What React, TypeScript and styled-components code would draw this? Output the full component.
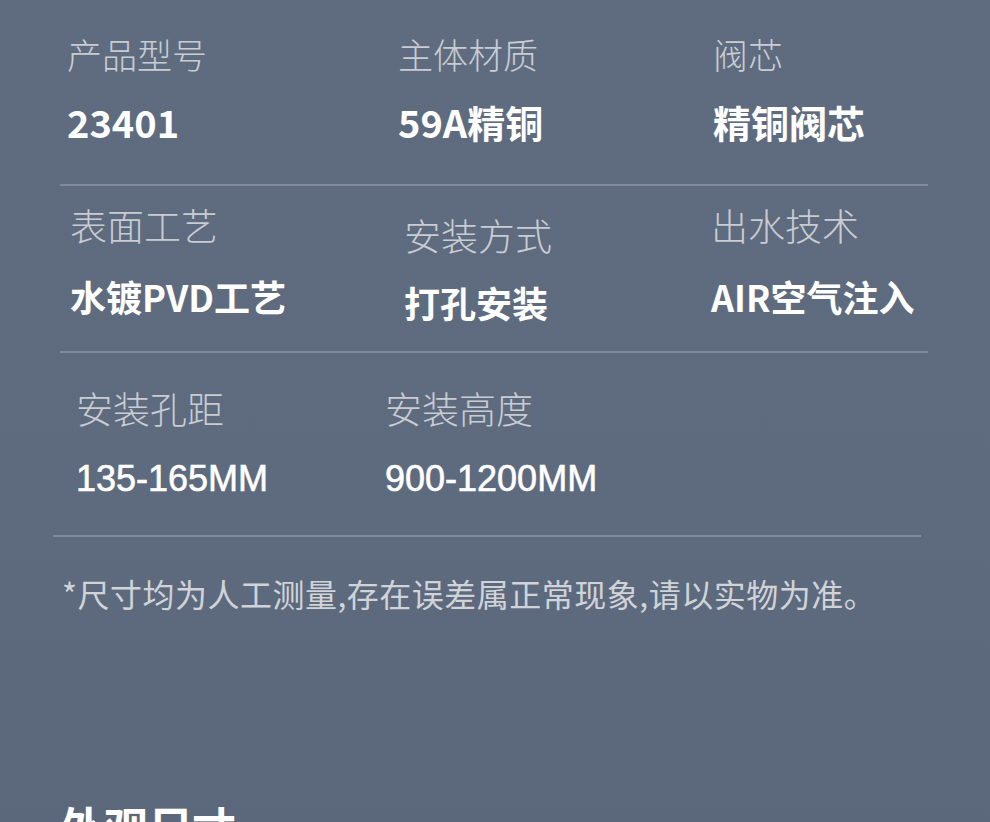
import React from "react";
import styled, { createGlobalStyle } from "styled-components";

interface SpecItem {
  label: string;
  value: string;
  latin?: boolean;
  shift?: number;
  gap?: number;
}

interface SpecRowType {
  cols: string;
  pad: number;
  left: number;
  top: number;
  height: number;
  gap: number;
  labelSize: number;
  size: number;
  items: SpecItem[];
}

const specRows: SpecRowType[] = [
  {
    cols: "331px 315px 1fr",
    pad: 7,
    left: 60,
    top: 36,
    height: 186,
    gap: 32,
    labelSize: 35,
    size: 38,
    items: [
      { label: "产品型号", value: "23401" },
      { label: "主体材质", value: "59A精铜" },
      { label: "阀芯", value: "精铜阀芯" },
    ],
  },
  {
    cols: "334px 307px 1fr",
    pad: 10,
    left: 60,
    top: 21,
    height: 167,
    gap: 34,
    labelSize: 37,
    size: 36,
    items: [
      { label: "表面工艺", value: "水镀PVD工艺" },
      { label: "安装方式", value: "打孔安装", shift: 10, gap: 30 },
      { label: "出水技术", value: "AIR空气注入" },
    ],
  },
  {
    cols: "309px 1fr",
    pad: 23,
    left: 53,
    top: 37,
    height: 184,
    gap: 34,
    labelSize: 37,
    size: 36,
    items: [
      { label: "安装孔距", value: "135-165MM", latin: true },
      { label: "安装高度", value: "900-1200MM", latin: true },
    ],
  },
];

const App: React.FC = () => {
  return (
    <>
      <GlobalStyle />
      <S.Page>
        {specRows.map((row, i) => (
          <S.SpecRow
            key={i}
            $cols={row.cols}
            $pad={row.pad}
            $left={row.left}
            $top={row.top}
            $height={row.height}
          >
            {row.items.map(({ label, value, latin, shift, gap }) => (
              <S.Cell key={label} $shift={shift ?? 0} $gap={gap ?? row.gap}>
                <S.Label $size={row.labelSize}>{label}</S.Label>
                <S.Value $latin={!!latin} $size={row.size}>
                  {value}
                </S.Value>
              </S.Cell>
            ))}
          </S.SpecRow>
        ))}
        <S.Note>*尺寸均为人工测量,存在误差属正常现象,请以实物为准。</S.Note>
        <S.SectionTitle>外观尺寸</S.SectionTitle>
      </S.Page>
    </>
  );
};

const GlobalStyle = createGlobalStyle`
  html, body {
    margin: 0;
    padding: 0;
    overflow: hidden;
  }
  body {
    font-family: "Noto Sans CJK SC", "Noto Sans", sans-serif;
    background: #5e6b7f;
  }
`;

const S = {
  Page: styled.div`
    width: 990px;
    height: 822px;
    overflow: hidden;
    display: flex;
    flex-direction: column;
    background: linear-gradient(180deg, #5f6c80 0%, #5e6b7f 60%, #5b687c 100%);
    & > * {
      flex-shrink: 0;
    }
  `,
  SpecRow: styled.div<{
    $cols: string;
    $pad: number;
    $left: number;
    $top: number;
    $height: number;
  }>`
    box-sizing: border-box;
    width: 868px;
    height: ${(p) => p.$height}px;
    margin-left: ${(p) => p.$left}px;
    padding: ${(p) => p.$top}px 0 0 ${(p) => p.$pad}px;
    display: grid;
    grid-template-columns: ${(p) => p.$cols};
    align-items: start;
    border-bottom: 2px solid #7f8b9d;
  `,
  Cell: styled.div<{ $shift: number; $gap: number }>`
    display: flex;
    flex-direction: column;
    gap: ${(p) => p.$gap}px;
    margin-top: ${(p) => p.$shift}px;
  `,
  Label: styled.span<{ $size: number }>`
    font-size: ${(p) => p.$size}px;
    line-height: 1;
    font-weight: 300;
    color: #c9cdd3;
    white-space: nowrap;
  `,
  Value: styled.span<{ $latin: boolean; $size: number }>`
    font-family: ${(p) =>
      p.$latin
        ? `"Liberation Sans", Arial, sans-serif`
        : `"Noto Sans CJK SC", "Noto Sans", sans-serif`};
    font-size: ${(p) => p.$size}px;
    line-height: 1;
    font-weight: ${(p) => (p.$latin ? 400 : 700)};
    color: #ffffff;
    white-space: nowrap;
    -webkit-text-stroke: ${(p) => (p.$latin ? "0.6px #ffffff" : "0")};
  `,
  Note: styled.p`
    margin: 40px 0 0 62px;
    font-size: 32px;
    line-height: 1;
    font-weight: 400;
    letter-spacing: 0.5px;
    color: #d0d3d8;
    white-space: nowrap;
  `,
  SectionTitle: styled.h2`
    margin: 195px 0 0 60px;
    font-size: 44px;
    line-height: 1;
    font-weight: 700;
    color: #ffffff;
    white-space: nowrap;
  `,
};

export default App;
